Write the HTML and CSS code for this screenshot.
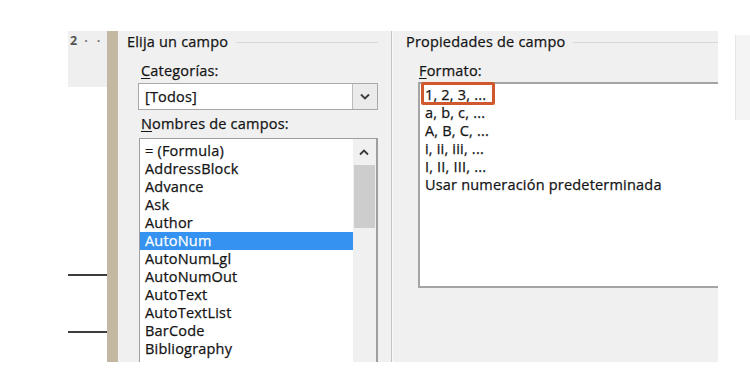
FILE: index.html
```html
<!DOCTYPE html>
<html lang="es">
<head>
<meta charset="utf-8">
<title>Campo</title>
<link rel="stylesheet" href="styles.css">
</head>
<body>
<div class="stage">
  <div class="gutter">
    <div class="ruler"><span class="num">2</span><span class="dot">·</span><span class="dot">·</span><span class="tick">ı</span></div>
    <div class="gline first"></div>
    <div class="gline second"></div>
  </div>
  <div class="tan"></div>
  <div class="dialog">
    <section class="pane left">
      <div class="legend"><span>Elija un campo</span><i class="rule"></i></div>
      <div class="label"><u>C</u>ategorías:</div>
      <div class="combo">
        <span class="value">[Todos]</span>
        <div class="dd"><svg width="10" height="7" viewBox="0 0 10 7"><path d="M1 1.5 L5 5.5 L9 1.5" fill="none" stroke="#3a3a3a" stroke-width="1.8"/></svg></div>
      </div>
      <div class="label"><u>N</u>ombres de campos:</div>
      <div class="listbox">
        <ul class="items">
          <li>= (Formula)</li>
          <li>AddressBlock</li>
          <li>Advance</li>
          <li>Ask</li>
          <li>Author</li>
          <li class="sel">AutoNum</li>
          <li>AutoNumLgl</li>
          <li>AutoNumOut</li>
          <li>AutoText</li>
          <li>AutoTextList</li>
          <li>BarCode</li>
          <li>Bibliography</li>
        </ul>
        <div class="scroll">
          <div class="up"><svg width="10" height="7" viewBox="0 0 10 7"><path d="M1 5.5 L5 1.5 L9 5.5" fill="none" stroke="#3a3a3a" stroke-width="1.8"/></svg></div>
          <div class="thumb"></div>
        </div>
      </div>
    </section>
    <div class="sep"></div>
    <section class="pane right">
      <div class="legend"><span>Propiedades de campo</span><i class="rule"></i></div>
      <div class="label fmt"><u>F</u>ormato:</div>
      <ul class="formats">
        <li class="hl">1, 2, 3, ...<span class="mark"></span></li>
        <li>a, b, c, ...</li>
        <li>A, B, C, ...</li>
        <li>i, ii, iii, ...</li>
        <li>I, II, III, ...</li>
        <li>Usar numeración predeterminada</li>
      </ul>
    </section>
  </div>
  <div class="side"></div>
</div>
</body>
</html>
```
FILE: styles.css
```css
html, body {
  margin: 0;
  padding: 0;
  background: #ffffff;
  overflow: hidden;
}
body {
  width: 750px;
  height: 374px;
  font-family: "Open Sans", "Noto Sans", sans-serif;
  font-size: 14.5px;
  letter-spacing: 0.2px;
  color: #141414;
  -webkit-text-stroke: 0.25px #141414;
}
.stage {
  display: flex;
  align-items: flex-start;
  padding: 31px 0 0 68px;
}
.gutter {
  width: 39px;
  height: 331px;
  display: flex;
  flex-direction: column;
}
.ruler {
  height: 56px;
  background: #efefef;
  display: flex;
  align-items: flex-start;
  padding: 1px 0 0 2px;
  box-sizing: border-box;
  font-size: 12.5px;
  font-weight: 700;
  color: #555;
  -webkit-text-stroke: 0;
  line-height: 17px;
  letter-spacing: 0;
}
.ruler .num { margin-right: 7px; }
.ruler .dot { margin-right: 9px; color: #777; }
.ruler .tick { color: #888; font-weight: 400; }
.gline {
  height: 2px;
  background: #3c3c3c;
}
.gline.first { margin-top: 187px; }
.gline.second { margin-top: 55px; }
.tan {
  width: 11px;
  height: 331px;
  background: #c3b8a2;
}
.dialog {
  width: 603px;
  height: 331px;
  background: #f0f0f0;
  display: flex;
  overflow: hidden;
}
.pane {
  display: flex;
  flex-direction: column;
  line-height: 18px;
}
.pane.left {
  width: 273px;
  box-sizing: border-box;
  padding: 2px 13px 0 9px;
}
.pane.right {
  flex: 1;
  padding: 2px 0 0 13px;
}
.legend {
  display: flex;
  align-items: center;
  height: 18px;
}
.legend span { white-space: nowrap; }
.legend .rule {
  flex: 1;
  height: 1px;
  background: #d8d8d8;
  margin-left: 8px;
}
.label {
  margin: 11px 0 0 14px;
  height: 18px;
}
.label u { text-decoration-thickness: 1px; text-underline-offset: 2px; }
.combo {
  margin: 3px 0 0 11px;
  height: 29px;
  box-sizing: border-box;
  border: 1px solid #a8a8a8;
  background: #fff;
  display: flex;
  align-items: center;
}
.combo .value {
  flex: 1;
  padding-left: 6px;
}
.combo .dd {
  width: 24px;
  align-self: stretch;
  background: #ebebeb;
  border-left: 1px solid #bcbcbc;
  display: flex;
  align-items: center;
  justify-content: center;
}
.combo + .label { margin-top: 5px; }
.listbox {
  margin: 5px 0 0 12px;
  height: 240px;
  border: 1px solid #9e9e9e;
  border-width: 1px 2px 0 1px;
  background: #fff;
  display: flex;
}
.items {
  list-style: none;
  margin: 0;
  padding: 3px 0 0 0;
  flex: 1;
}
.items li {
  padding-left: 5px;
  height: 18px;
}
.items li.sel {
  background: #3592f0;
  color: #fff;
  -webkit-text-stroke: 0.25px #fff;
}
.scroll {
  width: 23px;
  background: #f0f0f0;
  display: flex;
  flex-direction: column;
  align-items: center;
}
.scroll .up {
  height: 26px;
  display: flex;
  align-items: center;
  justify-content: center;
}
.scroll .thumb {
  width: 21px;
  height: 63px;
  background: #cdcdcd;
}
.sep {
  width: 1px;
  height: 331px;
  background: #c4c4c4;
  border-right: 1px solid #fafafa;
}
.label.fmt { margin-left: 13px; }
.formats {
  list-style: none;
  margin: 2px 0 0 12px;
  padding: 2px 0 0 0;
  height: 200px;
  background: #fff;
  border: 2px solid #a4a4a4;
  border-right: 0;
}
.formats li {
  position: relative;
  padding-left: 5px;
  height: 18px;
  white-space: nowrap;
}
.formats .mark {
  position: absolute;
  left: 1px;
  top: -4px;
  width: 74px;
  height: 23px;
  box-sizing: border-box;
  border: 3px solid #d0582e;
  border-radius: 2px;
}
.side {
  margin: 4px 0 0 17px;
  width: 14px;
  height: 85px;
  background: #f4f4f4;
  border-left: 1px solid #e6e6e6;
}
```
